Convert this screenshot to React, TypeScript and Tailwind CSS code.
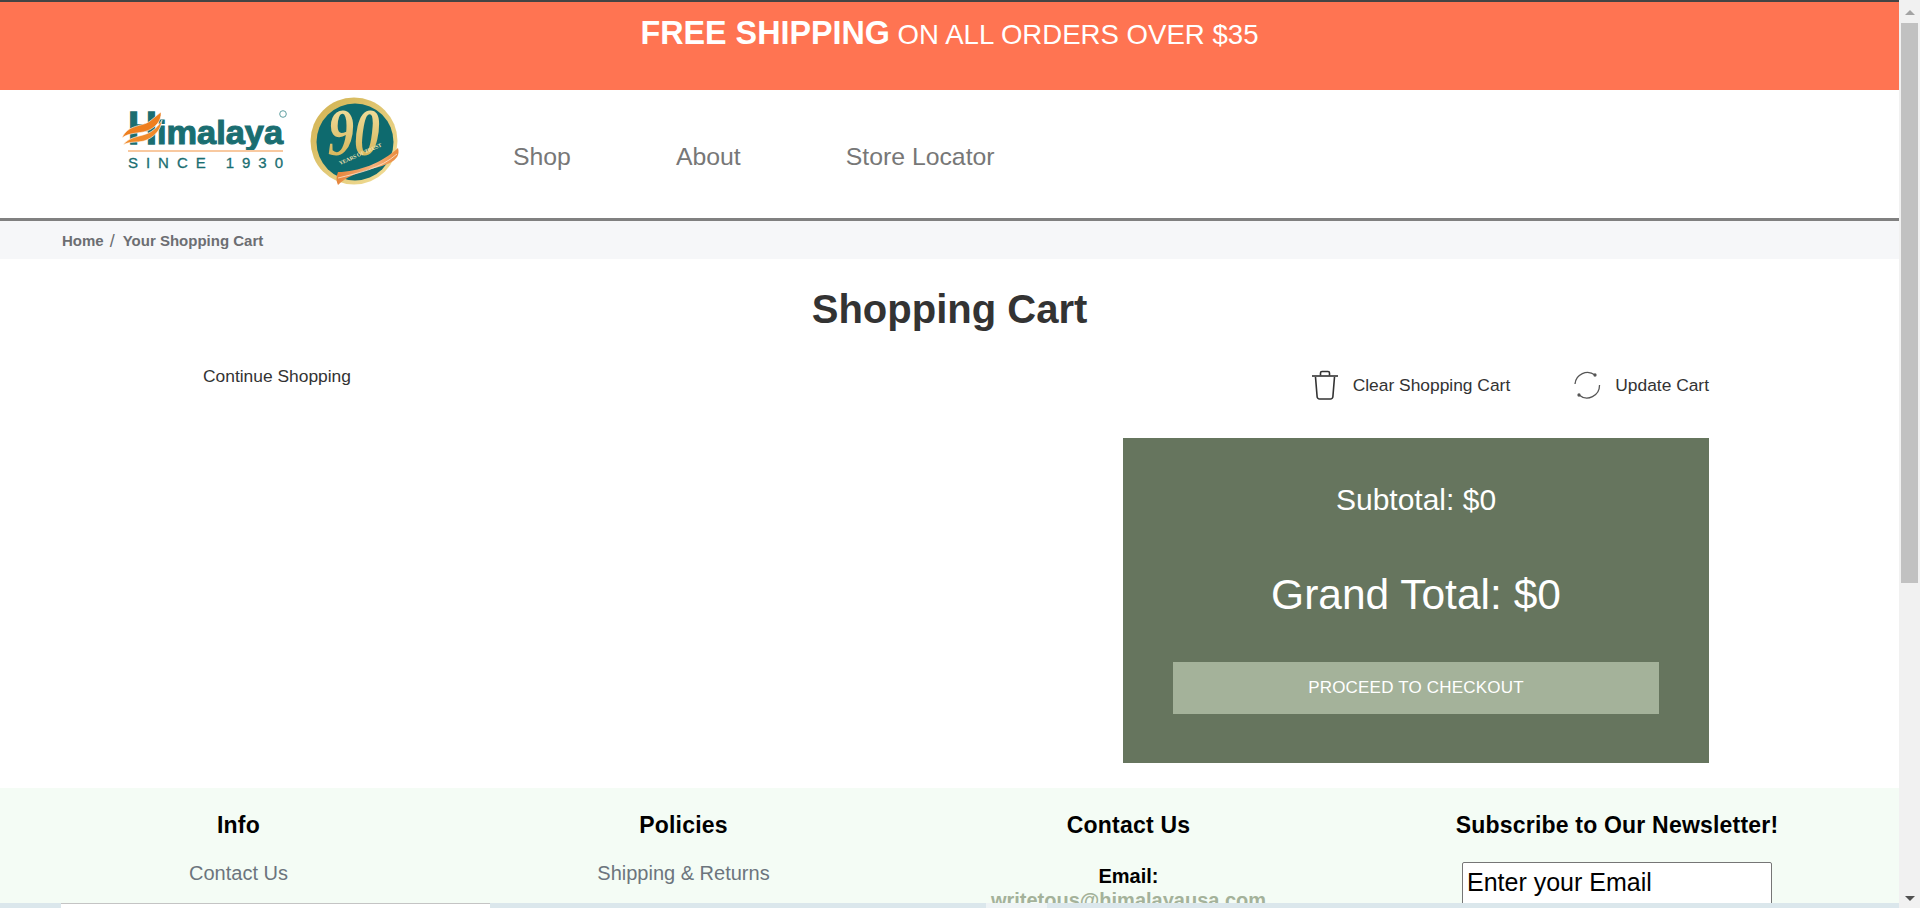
const font = "font-['Liberation_Sans',Arial,sans-serif]";

function HimalayaLogo() {
  return (
    <svg width="166" height="74" viewBox="0 -6 166 74" className="block overflow-visible">
      <g fontFamily="'Liberation Sans', Arial, sans-serif" fill="#1a6e71" stroke="#1a6e71">
        <text x="6" y="40" fontWeight="700" fontSize="46" textLength="29" lengthAdjust="spacingAndGlyphs" strokeWidth="1.5">
          H
        </text>
        <text x="35" y="40" fontWeight="700" fontSize="33" textLength="126" lengthAdjust="spacingAndGlyphs" strokeWidth="1.1">
          imalaya
        </text>
        <text x="6" y="64" fontSize="15" textLength="155" strokeWidth="0.3">
          SINCE 1930
        </text>
      </g>
      <path d="M0 34 C6 20 20 23 28 17 C32 14 35 11 39 8 C40 17 33 24 25 27 C16 30 8 28 0 34 Z" fill="#ee7f1f" stroke="#fff" strokeWidth="0.6" />
      <path d="M1 41 C8 31 22 33 30 27 C34 24 37 21 40 16 C39 27 31 34 22 37 C14 39 8 37 1 41 Z" fill="#f08a2a" stroke="#fff" strokeWidth="0.6" />
      <circle cx="161" cy="10" r="3.300" fill="none" stroke="#5f9fa1" strokeWidth="1" />
      <rect x="6" y="46" width="155" height="2" fill="#f8c9a0" />
    </svg>
  );
}

function AnniversaryBadge() {
  return (
    <svg width="90" height="97" viewBox="0 -7 90 97" className="block overflow-visible">
      <defs>
        <linearGradient id="ring" x1="0" y1="0" x2="1" y2="1">
          <stop offset="0" stopColor="#d0b04e" />
          <stop offset="1" stopColor="#f3e09c" />
        </linearGradient>
        <linearGradient id="digits" x1="0" y1="0" x2="0" y2="1">
          <stop offset="0" stopColor="#f6e8ac" />
          <stop offset="1" stopColor="#d0ab4a" />
        </linearGradient>
        <linearGradient id="ribbon" x1="0" y1="0" x2="1" y2="0">
          <stop offset="0" stopColor="#e5843a" />
          <stop offset="0.6" stopColor="#f6b27c" />
          <stop offset="1" stopColor="#e98a3c" />
        </linearGradient>
      </defs>
      <circle cx="44" cy="44" r="43.500" fill="url(#ring)" />
      <circle cx="45" cy="45" r="38.500" fill="#0e6a6e" />
      <text x="18" y="58" fontFamily="'Liberation Serif', serif" fontStyle="italic" fontWeight="700" fontSize="68" fill="url(#digits)" textLength="52" lengthAdjust="spacingAndGlyphs">
        90
      </text>
      <text x="30" y="68" fontFamily="'Liberation Serif', serif" fontWeight="700" fontSize="5.500" fill="#f2e3b0" textLength="46" transform="rotate(-24 30 68)">
        YEARS OF TRUST
      </text>
      <path d="M28 75 C48 75 72 66 88 51 C90 58 86 62 83 64 C72 72 44 72 28 88 C26 84 26 80 28 75 Z" fill="url(#ribbon)" />
      <path d="M28 81 C48 76 70 72 87 57" fill="none" stroke="#fde6d0" strokeWidth="0.8" />
    </svg>
  );
}

function TrashIcon() {
  return (
    <svg width="28" height="32" viewBox="0 0 28 32" fill="none" stroke="#333" strokeWidth="1.6" className="block">
      <path d="M1 7h26" />
      <path d="M9.500 6.500V4a1.500 1.500 0 0 1 1.500-1.500h6A1.500 1.500 0 0 1 18.500 4v2.500" />
      <path d="M4.500 8l1.600 19.500A2.500 2.500 0 0 0 8.600 30h10.800a2.500 2.500 0 0 0 2.500-2.500L23.500 8" />
    </svg>
  );
}

function RefreshIcon() {
  return (
    <svg width="28" height="28" viewBox="0 0 28 28" fill="none" stroke="#555" strokeWidth="1.3" className="block">
      <path d="M2 13A12.500 12.500 0 0 1 22 4" />
      <path d="M26.500 14A12.500 12.500 0 0 1 6 24" />
      <circle cx="22" cy="4" r="1" fill="#555" />
      <circle cx="6" cy="24" r="1" fill="#555" />
    </svg>
  );
}

function FooterLink({ children }: { children: string }) {
  return <a className="block text-[20px] leading-[24px] text-[#6c757d]">{children}</a>;
}

function FooterHeading({ children }: { children: string }) {
  return <h4 className="text-[23px] leading-[26px] font-bold tracking-[0.2px] text-black">{children}</h4>;
}

export default function App() {
  return (
    <div className={`relative flex h-[908px] w-full overflow-hidden bg-white ${font}`}>
      <div className="min-w-0 flex-1">
        {/* banner */}
        <div className="h-[90px] border-t-2 border-[#444] bg-[#ff7452] pt-[13px] text-center text-white">
          <span className="text-[32.3px] leading-[36px] font-bold">FREE SHIPPING</span>
          <span className="text-[27.6px] leading-[36px]"> ON ALL ORDERS OVER $35</span>
        </div>

        {/* header */}
        <header className="flex h-[131px] items-start border-b-[3px] border-[#808080] pl-[122px]">
          <div className="mt-[8px]">
            <HimalayaLogo />
          </div>
          <div className="ml-[22px]">
            <AnniversaryBadge />
          </div>
          <nav className="ml-[113px] flex gap-[105px] self-center pt-[5px] text-[24.8px] text-[#777]">
            <a>Shop</a>
            <a>About</a>
            <a>Store Locator</a>
          </nav>
        </header>

        {/* breadcrumb */}
        <div className="flex h-[38px] items-center gap-[6px] bg-[#f6f7f9] pt-[2px] pl-[62px] text-[15px] font-bold text-[#6c6e72]">
          <span>Home</span>
          <span className="w-[7px] text-[18px] font-normal">/</span>
          <span>Your Shopping Cart</span>
        </div>

        <main className="h-[529px]">
          <h1 className="pt-[26px] text-center text-[40px] leading-[48px] font-bold text-[#333]">Shopping Cart</h1>

          <div className="mt-[24px] flex items-start justify-between pr-[190px] pl-[203px] text-[#333]">
            <a className="pt-[8px] text-[17.4px] leading-[22px]">Continue Shopping</a>
            <div className="flex items-center gap-[63px] pt-[12px] text-[17.4px]">
              <button type="button" className="flex items-center gap-[14px]">
                <TrashIcon />
                Clear Shopping Cart
              </button>
              <button type="button" className="flex items-center gap-[14px]">
                <RefreshIcon />
                Update Cart
              </button>
            </div>
          </div>

          <div className="mt-[37px] flex justify-end pr-[190px]">
            <section className="flex h-[325px] w-[586px] flex-col items-center bg-[#66755e] px-[50px] pt-[45px] text-white">
              <p className="text-[30px] leading-[34px]">Subtotal: $0</p>
              <p className="mt-[53px] text-[42.500px] leading-[50px]">Grand Total: $0</p>
              <button type="button" className="mt-[42px] h-[52px] w-full bg-[#a4b29a] text-[17px] tracking-[0.2px]">
                PROCEED TO CHECKOUT
              </button>
            </section>
          </div>
        </main>

        {/* footer */}
        <footer className="grid h-[120px] grid-cols-[445px_445px_445px_532px] overflow-hidden bg-[#f4fcf5] pt-[24px] pl-[16px] text-center">
          <div>
            <FooterHeading>Info</FooterHeading>
            <div className="mt-[23px]">
              <FooterLink>Contact Us</FooterLink>
            </div>
          </div>
          <div>
            <FooterHeading>Policies</FooterHeading>
            <div className="mt-[23px]">
              <FooterLink>{"Shipping & Returns"}</FooterLink>
            </div>
          </div>
          <div>
            <FooterHeading>Contact Us</FooterHeading>
            <p className="mt-[26px] text-[20px] leading-[24px] font-bold text-black">Email:</p>
            <a className="block text-[20px] leading-[24px] font-bold text-[#a4b29a]">writetous@himalayausa.com</a>
          </div>
          <div>
            <FooterHeading>Subscribe to Our Newsletter!</FooterHeading>
            <div className="mt-[24px] flex justify-center">
              <input
                readOnly
                value="Enter your Email"
                className="h-[46px] w-[310px] rounded-[2px] border border-[#767676] bg-white px-[4px] pb-[6px] text-[25px] text-black"
              />
            </div>
          </div>
        </footer>
      </div>

      {/* browser scrollbar */}
      <div className="flex w-[21px] shrink-0 flex-col items-center bg-[#f1f1f1]">
        <div className="flex h-[23px] items-center pt-[2px]">
          <div className="h-0 w-0 border-x-[5px] border-b-[5px] border-x-transparent border-b-[#a3a3a3]" />
        </div>
        <div className="h-[560px] w-[17px] bg-[#c1c1c1]" />
        <div className="flex flex-1 items-end pb-[7px]">
          <div className="h-0 w-0 border-x-[5px] border-t-[5px] border-x-transparent border-t-[#505050]" />
        </div>
      </div>

      {/* strip over the bottom edge */}
      <div className="absolute right-[21px] bottom-0 left-0 flex h-[5px] bg-[#dbe7ec]">
        <div className="ml-[61px] h-full w-[429px] border-t border-[#c4c4c4] bg-white" />
        <div className="ml-[496px] h-full w-[61px] bg-[#eef3f5]" />
      </div>
    </div>
  );
}
